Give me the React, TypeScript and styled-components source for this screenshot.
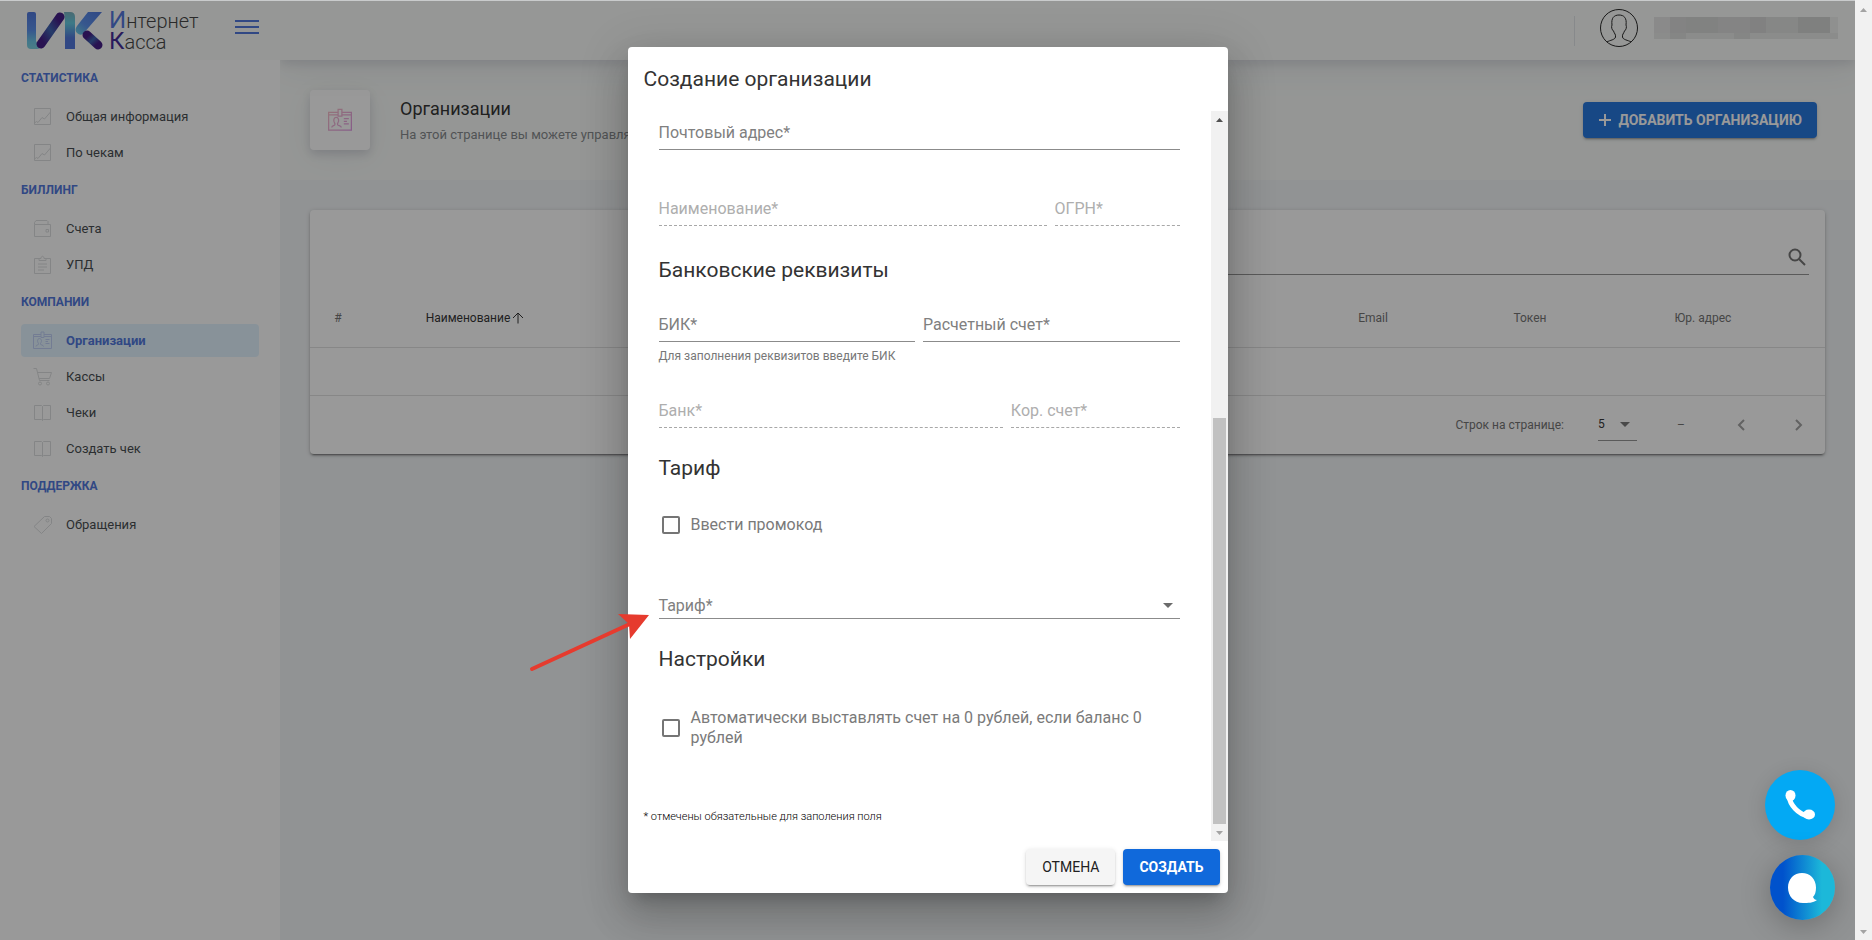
import React from "react";
import styled, { createGlobalStyle, css } from "styled-components";

const GlobalStyle = createGlobalStyle`
  *, *::before, *::after { box-sizing: border-box; }
  body {
    margin: 0;
    background: #f1f4f6;
    color: #212121;
    font-family: Roboto, "Liberation Sans", sans-serif;
    font-size: 14px;
    overflow: hidden;
  }
  button, input, select { font: inherit; color: inherit; }
`;

const ink = "#3f6ad8";
const line = "#dedede";

/* ---------- page shell ---------- */

const Shell = styled.div`
  display: grid;
  grid-template-columns: 1fr 17px;
  height: 100vh;
`;

const Page = styled.div`
  position: relative;
  display: grid;
  grid-template-columns: 280px 1fr;
  min-width: 0;
  overflow: hidden;
  border-top: 1px solid #c9cbcc;
`;

const Track = styled.div<{ $inset?: boolean }>`
  display: flex;
  flex-direction: column;
  justify-content: space-between;
  align-items: center;
  width: 17px;
  background: #f1f1f1;
  padding: ${(p) => (p.$inset ? "0" : "1px 0 0")};
`;

const Thumb = styled.div`
  width: 13px;
  flex: 406;
  background: #c1c1c1;
`;

const TrackGap = styled.div`
  flex: 290;
`;

const ScrollArrow = ({ up, dark }: { up?: boolean; dark?: boolean }) => (
  <svg width="17" height="17" viewBox="0 0 17 17" aria-hidden="true">
    <path d={up ? "M5 11h7L8.500 7z" : "M5 7h7l-3.500 4z"} fill={dark ? "#505050" : "#a3a3a3"} />
  </svg>
);

/* ---------- sidebar ---------- */

const Sidebar = styled.aside`
  background: #fff;
`;

const Brand = styled.div`
  display: flex;
  align-items: center;
  height: 59px;
  padding: 0 21px 0 26px;
  background: #fafcfa;
`;

const Wordmark = styled.div`
  display: flex;
  flex-direction: column;
  margin-left: 6px;
  font-size: 20px;
  font-weight: 300;
  line-height: 20px;
  color: #333;
`;

const Initial = styled.span<{ $deep?: boolean }>`
  font-size: 24px;
  font-weight: 400;
  color: ${(p) => (p.$deep ? "#31168f" : "#3f6ad8")};
`;

const MenuButton = styled.button`
  margin: 0 0 7px auto;
  padding: 0;
  border: 0;
  background: none;
  line-height: 0;
`;

const Nav = styled.nav`
  padding: 0 21px;
`;

const NavGroup = styled.section`
  padding-bottom: 3px;
`;

const NavHeading = styled.h5`
  margin: 0;
  height: 37px;
  line-height: 37px;
  font-size: 12px;
  font-weight: 700;
  color: ${ink};
  text-transform: uppercase;
`;

const NavList = styled.ul`
  display: grid;
  gap: 3px;
  margin: 0;
  padding: 3px 0 0;
  list-style: none;
`;

const NavLink = styled.a<{ $active?: boolean }>`
  display: flex;
  align-items: center;
  gap: 14px;
  height: 33px;
  padding-left: 12px;
  border-radius: 4px;
  font-size: 13px;
  color: #343a40;
  text-decoration: none;
  svg { stroke: #d8dadc; }
  ${(p) =>
    p.$active &&
    css`
      background: #e0f3ff;
      color: ${ink};
      font-weight: 700;
      svg { stroke: #b9caf4; }
    `}
`;

const icons: Record<string, React.ReactNode> = {
  graph: <path d="M1.500 1.500h16v16h-16zM1.500 16l2-1.500 1.500 1 4-5 2.500 1.500 6-7" />,
  wallet: <path d="M1.500 5.500h16v12h-16zM1.500 5.500v-2l1.500-2h11l1 1v3M13 10.500h2.500v2.500H13z" />,
  note: <path d="M6 3.500H1.500v15h16v-15H13M6 5.500h7v-2h-2c0-3-3-3-3 0H6zM5 9h9M5 12h9M5 15h6" />,
  id: (
    <path d="M8 3.500H.5v14h18v-14H11M.5 5.500H8M11 5.500h7.500M8 1h3v5.500H8zM3 15.500c0-2 3-1 2.500-3-2-3-.5-5 1-5s3 2 1 5c-.5 2 3 1 3 3M12.500 8.500h4M12.500 10.500h2.500M12.500 12.500h4" />
  ),
  cart: (
    <>
      <path d="M.5 1.500h3l3 12h10M4.500 5.500h14l-2 6H6" />
      <circle cx="7" cy="16.500" r="1.500" />
      <circle cx="15" cy="16.500" r="1.500" />
    </>
  ),
  book: <path d="M1.500 2.500h7l1 1 1-1h7v14h-7l-1 1-1-1h-7zM9.500 3.500v14" />,
  tag: (
    <>
      <path d="M11.500 1.500h5l2 2v5l-10 10-7.500-7z" />
      <circle cx="14.500" cy="5.500" r="1.500" />
    </>
  ),
};

const LineIcon = ({ name, size = 19 }: { name: string; size?: number }) => (
  <svg width={size} height={size} viewBox="0 0 19 19" fill="none" aria-hidden="true">
    {icons[name]}
  </svg>
);

const groups = [
  { title: "Статистика", items: [["graph", "Общая информация"], ["graph", "По чекам"]] },
  { title: "Биллинг", items: [["wallet", "Счета"], ["note", "УПД"]] },
  {
    title: "Компании",
    items: [["id", "Организации"], ["cart", "Кассы"], ["book", "Чеки"], ["book", "Создать чек"]],
  },
  { title: "Поддержка", items: [["tag", "Обращения"]] },
];

const Logo = () => (
  <svg width="77" height="38" viewBox="0 0 77 38" aria-hidden="true">
    <defs>
      <linearGradient id="lgA" x1="0" y1="0" x2="0" y2="1">
        <stop offset="0" stopColor="#3f6ad8" />
        <stop offset=".5" stopColor="#4a86ea" />
        <stop offset=".8" stopColor="#5fc3e4" />
        <stop offset="1" stopColor="#6fcbdc" />
      </linearGradient>
      <linearGradient id="lgB" x1="0" y1="1" x2="1" y2="0">
        <stop offset=".1" stopColor="#31067a" />
        <stop offset=".5" stopColor="#2a55a8" />
        <stop offset=".9" stopColor="#31067a" />
      </linearGradient>
      <linearGradient id="lgC" x1="0" y1="0" x2="0" y2="1">
        <stop offset="0" stopColor="#6ba8b8" />
        <stop offset=".3" stopColor="#55c6de" />
        <stop offset=".7" stopColor="#3f6ad8" />
      </linearGradient>
      <linearGradient id="lgD" x1="0" y1="1" x2="1" y2="0">
        <stop offset="0" stopColor="#5fd0e0" />
        <stop offset=".4" stopColor="#4a86ea" />
        <stop offset="1" stopColor="#3f6ad8" />
      </linearGradient>
      <linearGradient id="lgE" x1="0" y1="0" x2="1" y2="1">
        <stop offset=".1" stopColor="#31067a" />
        <stop offset=".5" stopColor="#2a55a8" />
        <stop offset=".9" stopColor="#31067a" />
      </linearGradient>
    </defs>
    <path d="M1 2q0-2 2-2h5q2 0 2 2v27l4 7q-1 1-3 1H5q-4 0-4-4z" fill="url(#lgA)" />
    <path d="M38 0h6q5 0 5 5v32H39V9z" fill="url(#lgC)" />
    <path d="M15 32L34 5" stroke="url(#lgB)" strokeWidth="9" strokeLinecap="round" />
    <path d="M62 0h14L57 22q-3 2-6-1-3-3 0-7z" fill="url(#lgD)" />
    <path d="M61 23l11 10" stroke="url(#lgE)" strokeWidth="9" strokeLinecap="round" />
  </svg>
);

/* ---------- main column ---------- */

const Main = styled.main`
  min-width: 0;
`;

const TopBar = styled.header`
  position: relative;
  display: flex;
  align-items: center;
  justify-content: flex-end;
  height: 59px;
  padding: 0 17px 14px 0;
  background: #fafcfa;
  box-shadow: 0 8px 35px rgba(8, 10, 60, 0.08), 0 4px 10px rgba(8, 10, 40, 0.1);
  clip-path: inset(0 0 -50px 0);
`;

const Divider = styled.span`
  width: 1px;
  height: 30px;
  margin: 14px 25px 0 0;
  background: #dee2e6;
`;

const UserButton = styled.button`
  display: flex;
  align-items: center;
  gap: 16px;
  margin-top: 8px;
  padding: 0;
  border: 0;
  background: none;
`;

const TitleBar = styled.div`
  display: flex;
  align-items: center;
  height: 120px;
  padding: 0 38px 0 30px;
  background: #f7faf8;
`;

const TitleIcon = styled.div`
  display: grid;
  place-items: center;
  width: 60px;
  height: 60px;
  margin-right: 30px;
  border-radius: 4px;
  background: #fff;
  box-shadow: 0 4px 10px rgba(8, 10, 40, 0.14), 0 6px 30px rgba(8, 10, 60, 0.06);
  svg { stroke: url(#titleGradient); opacity: 0.7; }
`;

const TitleText = styled.div`
  padding-top: 4px;
`;

const Title = styled.h1`
  margin: 0;
  font-size: 18px;
  font-weight: 400;
  line-height: 26px;
`;

const Subtitle = styled.p`
  margin: 0;
  font-size: 13px;
  line-height: 26px;
  color: #7b7f82;
`;

const Button = styled.button<{ $primary?: boolean }>`
  display: inline-flex;
  align-items: center;
  justify-content: center;
  gap: 6px;
  height: 36px;
  padding: 0 16px;
  border: 0;
  border-radius: 4px;
  font-size: 14px;
  font-weight: ${(p) => (p.$primary ? 700 : 400)};
  text-transform: uppercase;
  white-space: nowrap;
  color: ${(p) => (p.$primary ? "#fff" : "#212121")};
  background: ${(p) => (p.$primary ? "#1069db" : "#f5f5f5")};
  box-shadow: 0 3px 1px -2px rgba(0, 0, 0, 0.2), 0 2px 2px rgba(0, 0, 0, 0.14), 0 1px 5px rgba(0, 0, 0, 0.12);
`;

const AddButton = styled(Button)`
  margin-left: auto;
  padding: 0 15px;
`;

const Card = styled.section`
  margin: 30px;
  border-radius: 4px;
  background: #fff;
  box-shadow: 0 3px 1px -2px rgba(0, 0, 0, 0.3), 0 2px 2px rgba(0, 0, 0, 0.2), 0 1px 5px rgba(0, 0, 0, 0.2);
`;

const SearchRow = styled.div`
  display: flex;
  justify-content: flex-end;
  padding: 30px 16px 0;
`;

const SearchBox = styled.label`
  display: flex;
  align-items: center;
  width: 50%;
  height: 35px;
  padding-right: 3px;
  border-bottom: 1px solid #8b8b8b;
`;

const SearchInput = styled.input`
  flex: 1;
  min-width: 0;
  border: 0;
  outline: 0;
  background: none;
`;

const Table = styled.table`
  width: 100%;
  table-layout: fixed;
  border-collapse: collapse;
  font-size: 12px;
`;

const Th = styled.th<{ $sorted?: boolean }>`
  height: 72px;
  padding: 14px 0 0;
  border-bottom: 1px solid ${line};
  font-weight: 400;
  color: ${(p) => (p.$sorted ? "#212121" : "#666")};
  svg { vertical-align: -2px; margin-left: 2px; }
`;

const Td = styled.td`
  height: 48px;
  padding: 0;
  border-bottom: 1px solid ${line};
`;

const TableFoot = styled.div`
  display: flex;
  align-items: center;
  justify-content: flex-end;
  height: 58px;
  padding-right: 14px;
  font-size: 12px;
  color: #666;
`;

const RowsSelect = styled.span`
  display: grid;
  align-items: center;
  width: 39px;
  height: 33px;
  margin: 0 40px 0 34px;
  border-bottom: 1px solid #8b8b8b;
  color: #212121;
  svg { grid-area: 1 / 1; justify-self: end; margin-right: 7px; pointer-events: none; }
`;

const BareSelect = styled.select`
  grid-area: 1 / 1;
  width: 100%;
  padding: 0;
  border: 0;
  outline: 0;
  appearance: none;
  background: none;
`;

const PageButton = styled.button`
  display: grid;
  place-items: center;
  width: 24px;
  height: 24px;
  margin-left: 34px;
  padding: 0;
  border: 0;
  background: none;
`;

const Dash = styled.span`
  width: 18px;
`;

const Caret = () => (
  <svg width="10" height="5" viewBox="0 0 10 5" aria-hidden="true">
    <path d="M0 0h10L5 5z" fill="#6b6b6b" />
  </svg>
);

/* ---------- dialog ---------- */

const Overlay = styled.div`
  position: absolute;
  top: -1px;
  right: 0;
  bottom: 0;
  left: 0;
  display: grid;
  place-items: center;
  background: rgba(33, 33, 33, 0.46);
`;

const Dialog = styled.div`
  position: relative;
  display: flex;
  flex-direction: column;
  width: 600px;
  height: 90%;
  border-radius: 4px;
  background: #fff;
  box-shadow: 0 11px 15px -7px rgba(0, 0, 0, 0.2), 0 24px 38px 3px rgba(0, 0, 0, 0.14), 0 9px 46px 8px rgba(0, 0, 0, 0.12);
`;

const DialogTitle = styled.h2`
  margin: 0;
  padding: 16px 16px 0;
  height: 64px;
  font-size: 21px;
  font-weight: 400;
  line-height: 32px;
  color: #333;
`;

const DialogBody = styled.div`
  display: flex;
  flex: 1;
  min-height: 0;
`;

const Form = styled.form`
  display: flex;
  flex-direction: column;
  flex: 1;
  min-width: 0;
  padding: 0 31px;
`;

const FieldRow = styled.div<{ $cols?: string; $top?: number; $gap?: number }>`
  display: grid;
  grid-template-columns: ${(p) => p.$cols ?? "1fr"};
  column-gap: 8px;
  margin: ${(p) => p.$top ?? 0}px 0 ${(p) => p.$gap ?? 0}px;
`;

const FieldBox = styled.div<{ $disabled?: boolean; $select?: boolean }>`
  display: grid;
  align-items: center;
  height: 39px;
  padding-top: ${(p) => (p.$select ? 12 : 4)}px;
  font-size: 16px;
  color: ${(p) => (p.$disabled ? "#aeaeae" : "#808080")};
  border-bottom: 1px ${(p) => (p.$disabled ? "dashed #a8a8a8" : "solid #8b8b8b")};
  svg { grid-area: 1 / 1; justify-self: end; margin-right: 7px; pointer-events: none; }
`;

const FieldLabel = styled.label`
  grid-area: 1 / 1;
  pointer-events: none;
`;

const FieldInput = styled.input`
  grid-area: 1 / 1;
  width: 100%;
  min-width: 0;
  padding: 0;
  border: 0;
  outline: 0;
  background: none;
`;

const Hint = styled.p`
  margin: 0;
  height: 47px;
  padding-top: 6px;
  font-size: 12px;
  line-height: 16px;
  color: #777;
`;

const SectionTitle = styled.h3`
  margin: 0;
  height: 32px;
  font-size: 21px;
  font-weight: 400;
  line-height: 32px;
  color: #333;
`;

const CheckRow = styled.label<{ $top: number; $bottom: number }>`
  display: flex;
  align-items: center;
  gap: 11px;
  margin: ${(p) => p.$top}px 0 ${(p) => p.$bottom}px 3px;
  font-size: 16px;
  line-height: 20px;
  color: #7a7a7a;
`;

const Checkbox = styled.input`
  flex: none;
  appearance: none;
  width: 18px;
  height: 18px;
  margin: 0;
  border: 2px solid #757575;
  border-radius: 2px;
`;

const Required = styled.small`
  margin-left: -15px;
  font-size: 11px;
  font-weight: 300;
  line-height: 16px;
  color: #000;
`;

const DialogActions = styled.div`
  display: flex;
  justify-content: flex-end;
  gap: 8px;
  padding: 8px;
`;

const Pointer = styled.svg`
  position: absolute;
  left: -100px;
  top: 562px;
  pointer-events: none;
`;

const Field = ({ id, label, disabled }: { id: string; label: string; disabled?: boolean }) => (
  <FieldBox $disabled={disabled}>
    <FieldInput id={id} type="text" disabled={disabled} />
    <FieldLabel htmlFor={id}>{label}</FieldLabel>
  </FieldBox>
);

/* ---------- floating contacts ---------- */

const Contacts = styled.div`
  position: absolute;
  right: 20px;
  bottom: 20px;
  display: grid;
  justify-items: end;
  gap: 15px;
`;

const ContactButton = styled.button<{ $chat?: boolean }>`
  display: grid;
  place-items: center;
  width: ${(p) => (p.$chat ? 65 : 70)}px;
  height: ${(p) => (p.$chat ? 65 : 70)}px;
  padding: 0;
  border: 0;
  border-radius: 50%;
  background: ${(p) => (p.$chat ? "linear-gradient(90deg, #0052cc 20%, #1cb8d9 80%)" : "#03a9f4")};
  box-shadow: ${(p) => (p.$chat ? "0 6px 30px rgba(0, 0, 0, 0.25)" : "0 4px 20px rgba(0, 0, 0, 0.14)")};
`;

const mosaic = [
  [0, 0, 16, "#e4e4e4"], [16, 0, 16, "#d6d7d6"], [32, 0, 32, "#d3d4d3"], [64, 0, 32, "#d8d9d8"],
  [96, 0, 16, "#d2d3d2"], [112, 0, 32, "#dddedd"], [144, 0, 32, "#d0d1d0"], [176, 0, 8, "#eceeec"],
] as const;

export default function App() {
  return (
    <Shell>
      <GlobalStyle />
      <Page>
        <Sidebar>
          <Brand>
            <Logo />
            <Wordmark>
              <span><Initial>И</Initial>нтернет</span>
              <span><Initial $deep>К</Initial>асса</span>
            </Wordmark>
            <MenuButton type="button" aria-label="Меню">
              <svg width="24" height="14" viewBox="0 0 24 14" fill={ink}>
                <path d="M0 0h24v2H0zM0 6h24v2H0zM0 12h24v2H0z" />
              </svg>
            </MenuButton>
          </Brand>
          <Nav>
            {groups.map((g) => (
              <NavGroup key={g.title}>
                <NavHeading>{g.title}</NavHeading>
                <NavList>
                  {g.items.map(([icon, text]) => (
                    <li key={text}>
                      <NavLink href="#" $active={text === "Организации"}>
                        <LineIcon name={icon} />
                        {text}
                      </NavLink>
                    </li>
                  ))}
                </NavList>
              </NavGroup>
            ))}
          </Nav>
        </Sidebar>

        <Main>
          <TopBar>
            <Divider />
            <UserButton type="button" aria-label="Профиль">
              <svg width="38" height="38" viewBox="0 0 38 38" fill="none" stroke="#111" strokeWidth="1">
                <circle cx="19" cy="19" r="18.500" />
                <path d="M7 33c3-2 8-2 8.500-5 .3-3-1-3-2-6-1.500-1-2.500-4-1.500-6-1-7 2-10 7-10s8 3 7 10c1 2 0 5-1.500 6-1 3-2.300 3-2 6 .5 3 5.500 3 8.500 5" />
              </svg>
              <svg width="184" height="22" viewBox="0 0 184 22">
                {mosaic.map(([x, y, w, c]) => (
                  <rect key={x} x={x} y={y} width={w} height="16" fill={c} />
                ))}
                <path d="M0 16h184v6H0z" fill="#e6e8e6" />
                <path d="M16 16h16v6H16zM80 16h16v6H80z" fill="#dbdcdb" />
              </svg>
            </UserButton>
          </TopBar>

          <TitleBar>
            <TitleIcon>
              <svg width="0" height="0" style={{ position: "absolute" }} aria-hidden="true">
                <linearGradient id="titleGradient" gradientUnits="userSpaceOnUse" x1="0" y1="0" x2="19" y2="19">
                  <stop offset="0" stopColor="#f6a0a8" />
                  <stop offset="1" stopColor="#cf5fd8" />
                </linearGradient>
              </svg>
              <LineIcon name="id" size={24} />
            </TitleIcon>
            <TitleText>
              <Title>Организации</Title>
              <Subtitle>На этой странице вы можете управлять</Subtitle>
            </TitleText>
            <AddButton type="button" $primary>
              <svg width="14" height="14" viewBox="0 0 14 14" aria-hidden="true">
                <path d="M1 7h12M7 1v12" stroke="#fff" strokeWidth="2" />
              </svg>
              Добавить организацию
            </AddButton>
          </TitleBar>

          <Card>
            <SearchRow>
              <SearchBox>
                <SearchInput type="search" aria-label="Поиск" />
                <svg width="18" height="18" viewBox="0 0 18 18" fill="none" stroke="#666" strokeWidth="2" aria-hidden="true">
                  <circle cx="7" cy="7" r="5.500" />
                  <path d="M11 11l6 6" />
                </svg>
              </SearchBox>
            </SearchRow>
            <Table>
              <colgroup>
                <col width="56" />
                <col width="218" />
                <col />
                <col width="146" />
                <col width="168" />
                <col width="178" />
                <col width="33" />
              </colgroup>
              <thead>
                <tr>
                  <Th>#</Th>
                  <Th $sorted>
                    Наименование
                    <svg width="12" height="12" viewBox="0 0 12 12" fill="none" stroke="#212121" aria-hidden="true">
                      <path d="M6 11.500V1M1 6l5-5 5 5" />
                    </svg>
                  </Th>
                  <Th />
                  <Th>Email</Th>
                  <Th>Токен</Th>
                  <Th>Юр. адрес</Th>
                  <Th />
                </tr>
              </thead>
              <tbody>
                <tr>
                  <Td colSpan={7} />
                </tr>
              </tbody>
            </Table>
            <TableFoot>
              <label htmlFor="rows">Строк на странице:</label>
              <RowsSelect>
                <BareSelect id="rows" defaultValue="5">
                  <option>5</option>
                  <option>10</option>
                </BareSelect>
                <Caret />
              </RowsSelect>
              <Dash>–</Dash>
              <PageButton type="button" aria-label="Назад">
                <svg width="8" height="12" viewBox="0 0 8 12" fill="none" stroke="#999" strokeWidth="2">
                  <path d="M7 1L2 6l5 5" />
                </svg>
              </PageButton>
              <PageButton type="button" aria-label="Вперёд">
                <svg width="8" height="12" viewBox="0 0 8 12" fill="none" stroke="#999" strokeWidth="2">
                  <path d="M1 1l5 5-5 5" />
                </svg>
              </PageButton>
            </TableFoot>
          </Card>
        </Main>

        <Overlay>
          <Dialog role="dialog" aria-labelledby="dialog-title">
            <DialogTitle id="dialog-title">Создание организации</DialogTitle>
            <DialogBody>
              <Form id="org-form">
                <FieldRow $gap={37}>
                  <Field id="post" label="Почтовый адрес*" />
                </FieldRow>
                <FieldRow $cols="388fr 125fr" $gap={28}>
                  <Field id="name" label="Наименование*" disabled />
                  <Field id="ogrn" label="ОГРН*" disabled />
                </FieldRow>
                <SectionTitle>Банковские реквизиты</SectionTitle>
                <FieldRow $cols="1fr 1fr" $top={17}>
                  <Field id="bik" label="БИК*" />
                  <Field id="account" label="Расчетный счет*" />
                </FieldRow>
                <Hint>Для заполнения реквизитов введите БИК</Hint>
                <FieldRow $cols="345fr 169fr" $gap={24}>
                  <Field id="bank" label="Банк*" disabled />
                  <Field id="corr" label="Кор. счет*" disabled />
                </FieldRow>
                <SectionTitle>Тариф</SectionTitle>
                <CheckRow $top={31} $bottom={45}>
                  <Checkbox type="checkbox" />
                  Ввести промокод
                </CheckRow>
                <FieldRow $gap={24}>
                  <FieldBox $select>
                    <BareSelect id="tariff" defaultValue="">
                      <option value="" />
                    </BareSelect>
                    <FieldLabel htmlFor="tariff">Тариф*</FieldLabel>
                    <Caret />
                  </FieldBox>
                </FieldRow>
                <SectionTitle>Настройки</SectionTitle>
                <CheckRow $top={33} $bottom={61}>
                  <Checkbox type="checkbox" />
                  Автоматически выставлять счет на 0 рублей, если баланс 0 рублей
                </CheckRow>
                <Required>* отмечены обязательные для заполения поля</Required>
              </Form>
              <Track $inset>
                <ScrollArrow up dark />
                <TrackGap />
                <Thumb />
                <ScrollArrow />
              </Track>
            </DialogBody>
            <DialogActions>
              <Button type="button">Отмена</Button>
              <Button type="submit" form="org-form" $primary>Создать</Button>
            </DialogActions>
            <Pointer width="124" height="64" viewBox="0 0 124 64" aria-hidden="true">
              <path d="M4 60L104 14" stroke="#e63b2e" strokeWidth="4" strokeLinecap="round" />
              <path d="M121 6L90 5 101 15 102 30z" fill="#e63b2e" />
            </Pointer>
          </Dialog>
        </Overlay>

        <Contacts>
          <ContactButton type="button" aria-label="Позвонить">
            <svg width="30" height="30" viewBox="0 0 30 30" aria-hidden="true">
              <path d="M4 6c1 9 9 18 19 20" fill="none" stroke="#fff" strokeWidth="5" />
              <ellipse cx="5.500" cy="5.500" rx="5" ry="5.500" fill="#fff" />
              <ellipse cx="24" cy="24.500" rx="6" ry="5" fill="#fff" />
            </svg>
          </ContactButton>
          <ContactButton type="button" aria-label="Чат" $chat>
            <svg width="30" height="30" viewBox="0 0 30 30" aria-hidden="true">
              <path d="M14 0C6 0 0 6 0 14.500S6 30 15 30c5 0 10 0 14-3-2 0-3-1-4-3 2-2 3-5 3-9.500C28 6 22 0 14 0z" fill="#fff" />
            </svg>
          </ContactButton>
        </Contacts>
      </Page>
      <Track>
        <ScrollArrow up />
        <ScrollArrow />
      </Track>
    </Shell>
  );
}
